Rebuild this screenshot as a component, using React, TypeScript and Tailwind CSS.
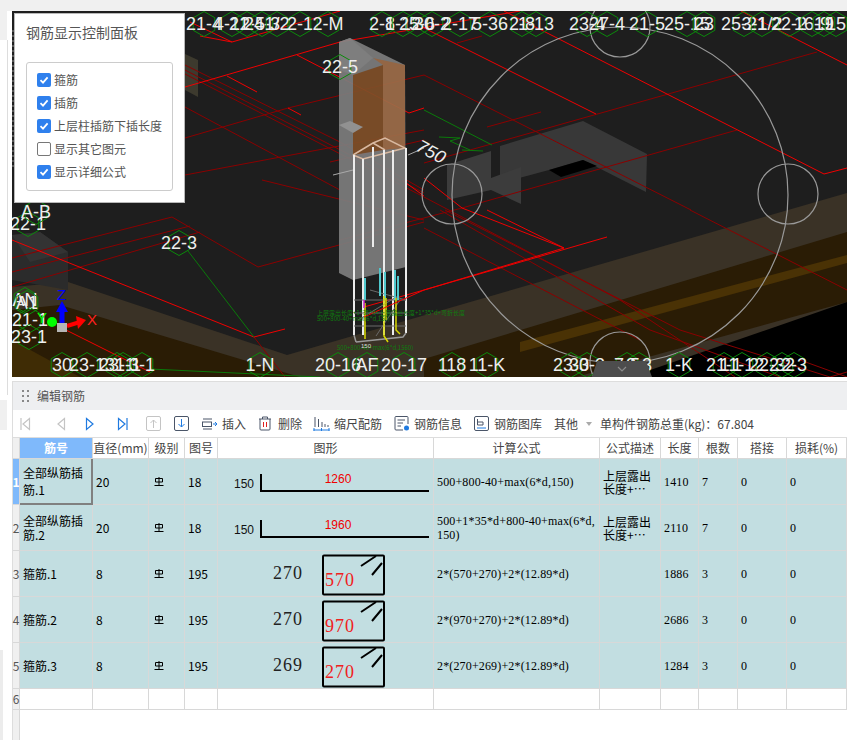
import React from 'react';

const CJK = '"Noto Sans CJK SC", "Liberation Sans", sans-serif';
const GRID = '7px 73px 56px 36px 33px 216px 166px 61px 38px 39px 49px 60px';

const BRIGHT = [
  'M185 87 L340 42', 'M190 22 L232 42 L340 11', 'M227 76 L257 92', 'M297 55 L409 113', 'M288 108 L301 115',
  'M504 11 L824 174 L847 168', 'M424 28 L596 114', 'M741 11 L847 65', 'M340 42 L520 11',
  'M12 240 L254 337 L285 329', 'M424 178 L462 208 L564 248 L424 290', 'M424 290 L607 237', 'M364 307 L424 290',
  'M200 36 L232 42', 'M409 113 L424 108', 'M60 327 L150 372', 'M487 210 L564 248', 'M402 180 L424 196',
];
const DARK = [
  'M185 65 L340 142 L424 190', 'M185 70 L424 193', 'M185 74 L424 197', 'M185 107 L340 190', 'M185 138 L288 108 L424 75',
  'M185 175 L424 130', 'M424 75 L691 210', 'M817 52 L424 163', 'M487 127 L541 112', 'M737 130 L462 208 L340 240',
  'M457 43 L482 36', 'M424 197 L620 300 L735 377', 'M440 210 L650 330 L780 377', 'M445 210 L680 330 L830 377',
  'M424 228 L640 340', 'M690 210 L847 290', 'M12 258 L172 217 L258 267 L424 222', 'M12 272 L190 226', 'M12 287 L200 232',
  'M254 337 L285 377', 'M262 180 L424 220', 'M330 162 L424 140', 'M800 360 L847 377', 'M830 377 L847 372',
];

// hexagon markers with their axis names, overlapping like the model view
const LABELS: [number, number, string][] = [
  [204, 24, '21-4'], [232, 24, '4-12'], [247, 24, '21-5'], [262, 24, '24-3'], [277, 24, '1/2'], [300, 24, '2-1'], [328, 24, '2-M'],
  [382, 24, '2-8'], [403, 24, '1-12'], [417, 24, '25-6'], [432, 24, '30-2'], [460, 24, '2-17'], [490, 24, '5-36'], [522, 24, '2-8'], [536, 24, '1-13'],
  [587, 24, '23-4'], [607, 24, '27-4'], [647, 24, '21-5'], [687, 24, '25-15'], [704, 24, '23'], [744, 24, '25-21'], [762, 24, '3-1/2'], [789, 24, '22-2'],
  [812, 24, '16-9'], [824, 24, '19'], [836, 24, '15'],
  [340, 67, '22-5'], [28, 224, '22-1'], [36, 212, 'A-B'], [179, 243, '22-3'],
  [25, 300, 'AN'], [27, 303, 'A1'], [30, 320, '21-1'], [29, 337, '23-1'],
  [62, 365, '30'], [87, 365, '23-1'], [117, 365, '23-1'], [123, 365, '31-1'], [142, 365, '3-1'], [260, 365, '1-N'],
  [338, 365, '20-16'], [367, 365, 'AF'], [404, 365, '20-17'], [452, 365, '118'], [487, 365, '11-K'], [571, 365, '23-3'], [587, 365, '30-3'],
  [627, 365, '7-5'], [639, 365, '3-3'], [679, 365, '1-K'], [724, 365, '21-1'], [742, 365, '11-12'], [767, 365, '22-3'], [782, 365, '2-2'], [794, 365, '2-3'],
];

function hex(x: number, y: number) {
  const pts: string[] = [];
  for (let i = 0; i < 6; i++) {
    const a = (Math.PI / 3) * i + Math.PI / 6;
    pts.push(`${(x + 12.5 * Math.cos(a)).toFixed(1)},${(y + 12.5 * Math.sin(a)).toFixed(1)}`);
  }
  return pts.join(' ');
}

function Scene() {
  return (
    <svg viewBox="12 11 835 366" width={835} height={366} className="block">
      <rect x="12" y="11" width="835" height="366" fill="#1e1e1e" />
      <polygon points="12,287 68,282 287,355 847,193 847,377 12,377" fill="#3a3226" />
      <polygon points="12,310 60,305 300,377 12,377" fill="#2a1c05" />
      <polygon points="12,340 80,377 12,377" fill="#3f2c05" />
      <polygon points="424,359 847,232 847,302 576,377 424,377" fill="#2a1c05" />
      <polygon points="520,342 847,255 847,263 520,352" fill="#4a3205" />
      <polygon points="630,377 847,302 847,377" fill="#000" />
      <polygon points="12,235 40,232 68,252 68,290 12,280" fill="#2b2b2b" />
      <polygon points="12,235 40,232 68,252 30,262" fill="#333" />
      <polygon points="185,54 198,60 198,97 185,90" fill="#3d3a2e" />

      <polygon points="500,146 583,121 647,154 646,192 583,160 549,170 500,183" fill="#383838" />
      <polygon points="549,170 583,160 597,166 561,177" fill="#000" />
      <polygon points="447,165 491,151 491,178 521,167 521,204 491,190 447,200" fill="#3c3c3c" />

      {DARK.map((d, i) => <path key={i} d={d} fill="none" stroke="#8b0000" strokeWidth="1" />)}
      {BRIGHT.map((d, i) => <path key={i} d={d} fill="none" stroke="#f00000" strokeWidth="1" />)}

      <path d="M424 110 L492 145 M439 137 L460 138 L450 141 L470 150 M462 150 L483 151 M188 251 L254 337" fill="none" stroke="#0a7a0a" strokeWidth="1" />
      <path d="M150 369 L320 377" fill="none" stroke="#0a7a0a" strokeWidth="1" />

      {/* column and cage */}
      <g opacity="0.93">
        <polygon points="339,42 350,38 405,65 406,267 353,280 339,273" fill="#7c7c7c" />
        <polygon points="350,38 373,58 353,75 339,70 339,42" fill="#868686" />
        <polygon points="353,75 383,65 383,150 353,155" fill="#7f4f28" />
        <polygon points="373,58 405,65 405,148 383,150 383,65" fill="#9c6c48" />
        <polygon points="339,125 350,121 363,127 353,133" fill="#9a9a9a" />
      </g>
      <path d="M353 155 L363 159 L405 148 L385 138 L373 143 L353 155 M373 143 L385 150" fill="none" stroke="#d8b8a0" strokeWidth="1.5" />
      <path d="M333 175 L353 170 M408 155 L424 148" fill="none" stroke="#aaa" strokeWidth="1" />
      <path d="M354 155 V335 M363 159 V335 M373 147 V247 M384 150 V335 M393 150 V335 M406 148 V333" fill="none" stroke="#ececec" strokeWidth="2" />
      <path d="M356 342 L403 337 L406 333 M354 335 L356 342" fill="none" stroke="#999" strokeWidth="1.5" />
      <path d="M354 300 H406 M354 313 H406 M354 326 H406 M370 290 L406 300 M358 320 L398 296 M376 336 L400 300" fill="none" stroke="#6a6a6a" strokeWidth="1" />
      <path d="M365 278 V300 M380 268 V296 M385 272 V300 M395 270 V300 M398 276 V300" fill="none" stroke="#4fc7cc" strokeWidth="2" />
      <path d="M365 303 V339 M384 296 V336 L388 342 M386 298 V320 M396 298 V330 L400 334" fill="none" stroke="#d8d800" strokeWidth="1.5" />
      <path d="M364 300 V308" stroke="#d020d0" strokeWidth="1.5" />
      <path d="M364 317 L424 290" stroke="#f00000" strokeWidth="1" />

      <g fontFamily={CJK} fontSize="6" fill="#0f7d0f">
        <text x="317" y="315">上层露出长度+1*35*d+上层露出长度+1*35*d+弯折长度</text>
        <text x="317" y="321">500+800-40+max(6*d,150)</text>
        <text x="337" y="350">500+800-40+max(6*d,1560)</text>
      </g>
      <text x="361" y="348" fontSize="6" fill="#ddd" fontFamily="Liberation Sans, sans-serif">150</text>

      <g fill="none" stroke="#999" strokeWidth="1.2">
        <circle cx="620" cy="195" r="168" />
        <circle cx="620" cy="27" r="30" />
        <circle cx="452" cy="194" r="30" />
        <circle cx="788" cy="194" r="30" />
        <circle cx="620" cy="362" r="30" />
      </g>

      <g fontFamily="Liberation Sans, sans-serif" fontSize="18" fill="#eeeeee" textAnchor="middle">
        {LABELS.map(([x, y, t], i) => (
          <g key={i}>
            <polygon points={hex(x, y)} fill="none" stroke="#0b8a0b" strokeWidth="1" />
            <text x={x} y={y + 6}>{t}</text>
          </g>
        ))}
      </g>
      <text x="0" y="0" transform="translate(415 150) rotate(28)" fontSize="18" fontStyle="italic" fontFamily="Liberation Sans, sans-serif" fill="#eeeeee">750</text>

      {/* axis gizmo */}
      <path d="M62 324 V310" stroke="#0000ff" strokeWidth="5" />
      <polygon points="62,301 68,312 56,312" fill="#0000ff" />
      <path d="M67 326 L80 322" stroke="#ff0000" strokeWidth="4" />
      <polygon points="86,320 76,316 78,329" fill="#ff0000" />
      <path d="M56 324 L50 320" stroke="#00ff00" strokeWidth="4" />
      <circle cx="52" cy="322" r="5" fill="#00ff00" />
      <rect x="57" y="323" width="10" height="9" fill="#b5b5b5" />
      <text x="57" y="300" fontSize="15" fill="#0000ff" fontFamily="Liberation Sans, sans-serif">Z</text>
      <text x="87" y="325" fontSize="15" fill="#ff2020" fontFamily="Liberation Sans, sans-serif">X</text>
      <text x="37" y="323" fontSize="15" fill="#00ff00" fontFamily="Liberation Sans, sans-serif">Y</text>

      {/* collapse handle */}
      <polygon points="592,377 597,361 646,361 652,377" fill="#4d4d4d" />
      <path d="M618 367 L622 371 L626 367" fill="none" stroke="#8a8a8a" strokeWidth="1.2" />
      <path d="M13 30 V170" stroke="#555" strokeWidth="2" strokeDasharray="2 3" />
    </svg>
  );
}

const OPTIONS = [
  { label: '箍筋', on: true },
  { label: '插筋', on: true },
  { label: '上层柱插筋下插长度', on: true },
  { label: '显示其它图元', on: false },
  { label: '显示详细公式', on: true },
];

function ControlPanel() {
  return (
    <div className="absolute left-[2px] top-[2px] flex h-[190px] w-[171px] flex-col border border-[#b8b8b8] bg-white pl-[11px] pr-[11px] pt-[8px] text-[#555]">
      <div className="text-[14px] leading-[20px]">钢筋显示控制面板</div>
      <div className="mt-[20px] flex h-[129px] w-[147px] flex-col gap-[9px] rounded-[3px] border border-[#cccccc] pl-[10px] pt-[10px]">
        {OPTIONS.map((o) => (
          <div key={o.label} className="flex h-[14px] items-center gap-[3px] text-[12px] leading-[14px]">
            {o.on ? (
              <span className="flex h-[14px] w-[14px] items-center justify-center rounded-[2px] bg-[#2f80ed]">
                <svg width="10" height="10" viewBox="0 0 10 10"><path d="M1.5 5.2 L4 7.6 L8.6 2.4" fill="none" stroke="#fff" strokeWidth="1.8" /></svg>
              </span>
            ) : (
              <span className="h-[14px] w-[14px] rounded-[2px] border border-[#777] bg-white" />
            )}
            <span>{o.label}</span>
          </div>
        ))}
      </div>
    </div>
  );
}

function Tri({ flip, bar, color }: { flip?: boolean; bar?: boolean; color: string }) {
  return (
    <svg width="11" height="14" viewBox="0 0 11 14" style={{ transform: flip ? 'scaleX(-1)' : undefined }}>
      <path d="M1.5 1.5 L8 7 L1.5 12.5 Z" fill="none" stroke={color} strokeWidth="1.2" />
      {bar && <path d="M10 1 V13" stroke={color} strokeWidth="1.2" />}
    </svg>
  );
}

function BoxArrow({ up, color, arrow }: { up?: boolean; color: string; arrow: string }) {
  return (
    <svg width="15" height="15" viewBox="0 0 15 15">
      <rect x="0.5" y="0.5" width="14" height="14" rx="1.5" fill="none" stroke={color} />
      <path d={up ? 'M7.5 12 V4 M4.5 7 L7.5 4 L10.5 7' : 'M7.5 3 V11 M4.5 8 L7.5 11 L10.5 8'} fill="none" stroke={arrow} />
    </svg>
  );
}

function Toolbar() {
  return (
    <div className="flex h-[28px] items-center border-b border-[#dddddd] bg-white pl-[7px] text-[12px] text-[#444]">
      <span className="w-[35px]"><Tri flip bar color="#c4c4c4" /></span>
      <span className="w-[30px]"><Tri flip color="#c4c4c4" /></span>
      <span className="w-[32px]"><Tri color="#1f7ae0" /></span>
      <span className="w-[29px]"><Tri bar color="#1f7ae0" /></span>
      <span className="flex w-[28px]"><BoxArrow up color="#c4c4c4" arrow="#c4c4c4" /></span>
      <span className="flex w-[28px]"><BoxArrow color="#4a5568" arrow="#1f7ae0" /></span>
      <svg width="16" height="12" viewBox="0 0 16 12" className="mr-[4px]">
        <path d="M10 1 H1 M10 11 H1" stroke="#4a5568" fill="none" />
        <rect x="0.5" y="4" width="9" height="4.5" fill="none" stroke="#4a5568" />
        <path d="M11 6 H15 M13 4 L15 6 L13 8" stroke="#1f7ae0" fill="none" />
      </svg>
      <span className="w-[36px]">插入</span>
      <svg width="14" height="15" viewBox="0 0 14 15" className="mr-[6px]">
        <path d="M1 3 H13 M4.5 3 V1 H9.5 V3 M2 3 V13 Q2 14 3 14 H11 Q12 14 12 13 V3" fill="none" stroke="#4a5568" />
        <path d="M5.5 6 V11 M8.5 6 V11" stroke="#e02020" />
      </svg>
      <span className="w-[35px]">删除</span>
      <svg width="17" height="15" viewBox="0 0 17 15" className="mr-[4px]">
        <path d="M2 1 V11 M5.5 3 V11 M9 6 V11 M12 8 V11 M15 9 V11" stroke="#4a5568" fill="none" />
        <path d="M0.5 14 H16.5 M1 12 V15 M8.5 12 V15 M16 12 V15" stroke="#1f7ae0" fill="none" />
      </svg>
      <span className="w-[60px]">缩尺配筋</span>
      <svg width="16" height="15" viewBox="0 0 16 15" className="mr-[4px]">
        <path d="M14 8 V1.5 Q14 0.5 13 0.5 H2 Q1 0.5 1 1.5 V13 Q1 14 2 14 H9" fill="none" stroke="#4a5568" />
        <path d="M3.5 4 H11 M3.5 7 H9 M3.5 10 H7" stroke="#4a5568" />
        <circle cx="12.5" cy="12" r="2.5" fill="#1f7ae0" />
      </svg>
      <span className="w-[60px]">钢筋信息</span>
      <svg width="15" height="15" viewBox="0 0 15 15" className="mr-[5px]">
        <rect x="0.5" y="0.5" width="14" height="14" rx="1.5" fill="none" stroke="#4a5568" />
        <path d="M3.5 3 V9 H9 V6 H3.5" fill="none" stroke="#4a5568" />
        <path d="M3 12 H12" stroke="#1f7ae0" />
      </svg>
      <span className="w-[60px]">钢筋图库</span>
      <span className="w-[32px]">其他</span>
      <svg width="6" height="4" viewBox="0 0 6 4" className="mr-[8px]"><path d="M0 0 H6 L3 4 Z" fill="#aaa" /></svg>
      <span>单构件钢筋总重(kg)：67.804</span>
    </div>
  );
}

const HEADERS = ['筋号', '直径(mm)', '级别', '图号', '图形', '计算公式', '公式描述', '长度', '根数', '搭接', '损耗(%)'];

type Row = {
  name: string; dia: string; code: string; formula: string; desc?: string; len: string; count: string;
  shape: { kind: 'bar'; hook: string; run: string } | { kind: 'hoop'; side: string; top: string };
};

const ROWS: Row[] = [
  { name: '全部纵筋插筋.1', dia: '20', code: '18', formula: '500+800-40+max(6*d,150)', desc: '上层露出长度+…', len: '1410', count: '7', shape: { kind: 'bar', hook: '150', run: '1260' } },
  { name: '全部纵筋插筋.2', dia: '20', code: '18', formula: '500+1*35*d+800-40+max(6*d,\u200b150)', desc: '上层露出长度+…', len: '2110', count: '7', shape: { kind: 'bar', hook: '150', run: '1960' } },
  { name: '箍筋.1', dia: '8', code: '195', formula: '2*(570+270)+2*(12.89*d)', len: '1886', count: '3', shape: { kind: 'hoop', side: '270', top: '570' } },
  { name: '箍筋.2', dia: '8', code: '195', formula: '2*(970+270)+2*(12.89*d)', len: '2686', count: '3', shape: { kind: 'hoop', side: '270', top: '970' } },
  { name: '箍筋.3', dia: '8', code: '195', formula: '2*(270+269)+2*(12.89*d)', len: '1284', count: '3', shape: { kind: 'hoop', side: '269', top: '270' } },
];

function Shape({ shape }: { shape: Row['shape'] }) {
  return (
    <svg width="215" height="45" viewBox="0 0 215 45" className="block">
      {shape.kind === 'bar' ? (
        <>
          <text x="16" y="29" fontSize="12" fontFamily="Liberation Sans, sans-serif" fill="#111">{shape.hook}</text>
          <path d="M43 15 V32 H211" fill="none" stroke="#000" strokeWidth="2" />
          <text x="120" y="24" fontSize="12" textAnchor="middle" fontFamily="Liberation Sans, sans-serif" fill="#f00000">{shape.run}</text>
        </>
      ) : (
        <>
          <text x="55" y="28" fontSize="18" fontFamily="Liberation Serif, serif" letterSpacing="1" fill="#222">{shape.side}</text>
          <rect x="105" y="4.5" width="61" height="39" rx="1" fill="none" stroke="#000" strokeWidth="2" />
          <path d="M143 15 L158 5 M154 24 L164 12" stroke="#000" strokeWidth="2" />
          <text x="107" y="35" fontSize="18" fontFamily="Liberation Serif, serif" letterSpacing="1" fill="#f02020">{shape.top}</text>
        </>
      )}
    </svg>
  );
}

function Grade() {
  return (
    <svg width="10" height="9" viewBox="0 0 10 9" className="ml-[5px]">
      <path d="M1.5 1.5 H8.5 V5 H1.5 Z M5 0 V8.5 M0.5 8.5 H9.5" fill="none" stroke="#000" />
    </svg>
  );
}

const CELL = 'flex h-[46px] items-center overflow-hidden border-b border-r border-[#d8d8d8] bg-[#c2dee1]';
const SERIF = { fontFamily: '"Liberation Serif", "Noto Sans CJK SC", serif', letterSpacing: '0.15px' };

function Table() {
  return (
    <div className="grid text-[12px] text-black" style={{ gridTemplateColumns: GRID }}>
      <div className="h-[21px] border-b border-r border-[#d8d8d8] bg-[#f0f0f0]" />
      {HEADERS.map((h, i) => (
        <div key={h} className={`flex h-[21px] items-center justify-center border-b border-r border-[#d8d8d8] ${i === 0 ? 'bg-[#7fb9fb] font-bold text-white' : 'bg-white text-[#444]'}`}>{h}</div>
      ))}
      {ROWS.map((r, i) => (
        <React.Fragment key={r.name}>
          <div className={`flex h-[46px] items-center justify-center border-b border-r border-[#d8d8d8] text-[12px] ${i === 0 ? 'bg-[#7fb9fb] font-bold text-white' : 'bg-[#f0f0f0] text-[#555]'}`}>{i + 1}</div>
          {i === 0 ? (
            <div className="flex h-[46px] items-center overflow-hidden border-b-2 border-r-2 border-[#808080] bg-[#c2dee1] pl-[3px] pr-[2px] leading-[17px]">{r.name}</div>
          ) : (
            <div className={`${CELL} pl-[3px] pr-[2px] leading-[14px]`}>{r.name}</div>
          )}
          <div className={`${CELL} pl-[3px]`}>{r.dia}</div>
          <div className={CELL}><Grade /></div>
          <div className={`${CELL} pl-[3px]`}>{r.code}</div>
          <div className={CELL}><Shape shape={r.shape} /></div>
          <div className={`${CELL} pl-[3px] pr-[2px] leading-[14px]`} style={SERIF}>{r.formula}</div>
          <div className={`${CELL} pl-[3px] pr-[4px] leading-[13px]`}>{r.desc}</div>
          <div className={`${CELL} pl-[3px]`} style={SERIF}>{r.len}</div>
          <div className={`${CELL} pl-[3px]`} style={SERIF}>{r.count}</div>
          <div className={`${CELL} pl-[3px]`} style={SERIF}>0</div>
          <div className={`${CELL} pl-[3px]`} style={SERIF}>0</div>
        </React.Fragment>
      ))}
      <div className="flex h-[21px] items-center justify-center border-b border-r border-[#d8d8d8] bg-[#f0f0f0] text-[#555]">6</div>
      {HEADERS.map((h) => <div key={h} className="h-[21px] border-b border-r border-[#d8d8d8] bg-white" />)}
    </div>
  );
}

export default function App() {
  return (
    <div className="flex h-[740px] w-[847px] flex-col overflow-hidden bg-white" style={{ fontFamily: CJK }}>
      <div className="h-[11px] shrink-0 bg-[#f0f0f0]" />
      <div className="flex min-h-0 flex-1">
        {/* left rail */}
        <div className="flex w-[12px] shrink-0 flex-col">
          <div className="h-[29px] w-[7px] bg-[#f0f0f0]" />
          <div className="h-[355px] w-[8px] border-r border-[#dddddd]" />
          <div className="mt-[5px] h-[30px] w-[7px] bg-[#f0f0f0]" />
          <div className="mt-[220px] h-[90px] w-[3px] bg-[#ececec]" />
        </div>
        <div className="flex min-w-0 flex-1 flex-col">
          <div className="relative h-[366px] shrink-0">
            <Scene />
            <ControlPanel />
          </div>
          <div className="h-[5px] shrink-0 border-b border-[#dddddd]" />
          <div className="flex min-h-0 flex-1 flex-col border-l border-[#dddddd]">
            <div className="flex h-[28px] shrink-0 items-center bg-[#eeeff1] pl-[9px] text-[12px] text-[#555]">
              <svg width="7" height="14" viewBox="0 0 7 14" className="mr-[8px]">
                {[1, 6, 11].map((y) => (
                  <g key={y} fill="#888">
                    <rect x="0" y={y} width="2" height="2" />
                    <rect x="5" y={y} width="2" height="2" />
                  </g>
                ))}
              </svg>
              编辑钢筋
            </div>
            <Toolbar />
            <div className="flex min-h-0 flex-1 flex-col">
              <Table />
              <div className="min-h-0 w-[7px] flex-1 border-r border-[#d8d8d8] bg-[#f0f0f0]" />
            </div>
          </div>
        </div>
      </div>
    </div>
  );
}
